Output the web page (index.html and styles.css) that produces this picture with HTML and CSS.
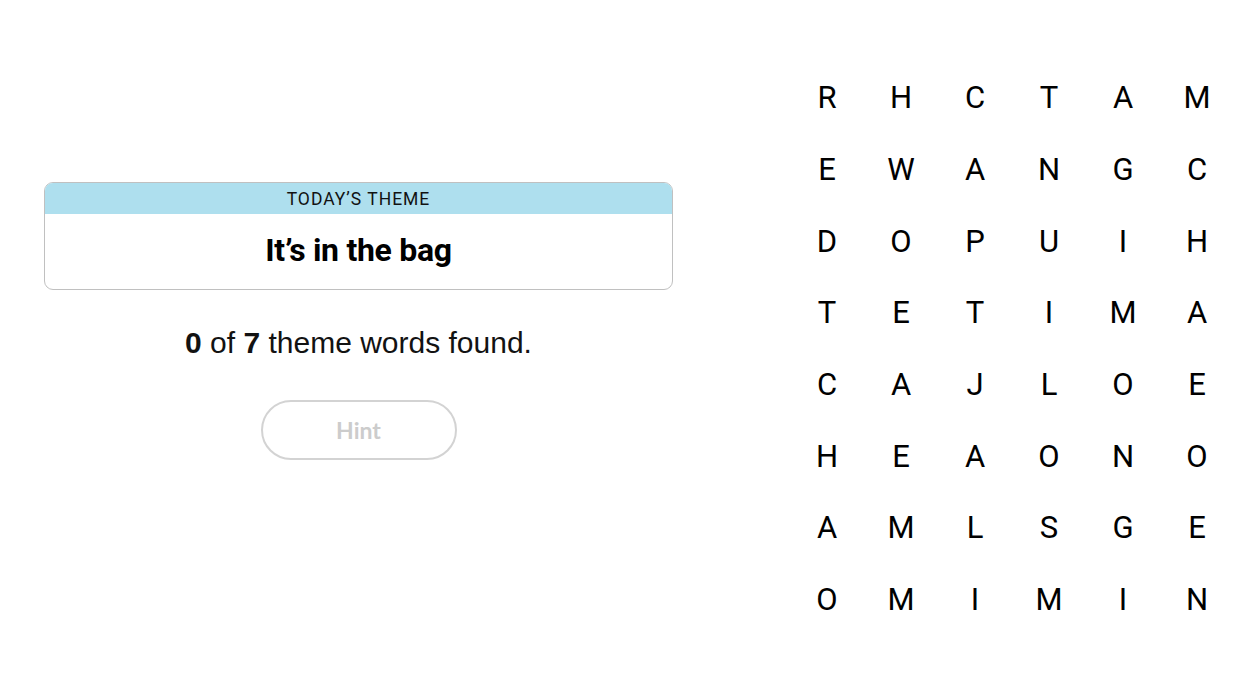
FILE: index.html
```html
<!DOCTYPE html>
<html>
<head>
<meta charset="utf-8">
<link rel="stylesheet" href="styles.css">
</head>
<body>
<main class="page">
  <section class="side">
    <div class="theme-card">
      <div class="theme-head">TODAY’S THEME</div>
      <div class="theme-body">It’s in the bag</div>
    </div>
    <p class="progress"><b>0</b> of <b>7</b> theme words found.</p>
    <button class="hint" type="button">Hint</button>
  </section>
  <section class="board">
    <span>R</span><span>H</span><span>C</span><span>T</span><span>A</span><span>M</span>
    <span>E</span><span>W</span><span>A</span><span>N</span><span>G</span><span>C</span>
    <span>D</span><span>O</span><span>P</span><span>U</span><span>I</span><span>H</span>
    <span>T</span><span>E</span><span>T</span><span>I</span><span>M</span><span>A</span>
    <span>C</span><span>A</span><span>J</span><span>L</span><span>O</span><span>E</span>
    <span>H</span><span>E</span><span>A</span><span>O</span><span>N</span><span>O</span>
    <span>A</span><span>M</span><span>L</span><span>S</span><span>G</span><span>E</span>
    <span>O</span><span>M</span><span>I</span><span>M</span><span>I</span><span>N</span>
  </section>
</main>
</body>
</html>
```

FILE: styles.css
```css
html, body {
  margin: 0;
  padding: 0;
  background: #ffffff;
  color: #000000;
  font-family: "Roboto", "Liberation Sans", sans-serif;
}

.page {
  display: flex;
  align-items: flex-start;
  width: 1250px;
  height: 680px;
}

.side {
  display: flex;
  flex-direction: column;
  align-items: center;
  width: 629px;
  margin-left: 44px;
  padding-top: 182px;
}

.theme-card {
  width: 627px;
  border: 1px solid #c0c0c0;
  border-radius: 9px;
  overflow: hidden;
}

.theme-head {
  background: #aedfee;
  height: 31px;
  line-height: 32px;
  text-align: center;
  font-size: 17.5px;
  letter-spacing: 1px;
  color: #121212;
}

.theme-body {
  height: 75px;
  line-height: 73px;
  text-align: center;
  font-size: 32px;
  font-weight: 700;
  letter-spacing: -0.3px;
  color: #000;
}

.progress {
  margin: 35px 0 0;
  font-family: "Liberation Sans", sans-serif;
  font-size: 30px;
  line-height: 36px;
  color: #121212;
}

.hint {
  margin-top: 39px;
  width: 196px;
  height: 60px;
  border: 2px solid #d3d3d3;
  border-radius: 30px;
  background: #fff;
  color: #cccccc;
  font-family: "Lato", sans-serif;
  font-weight: 700;
  font-size: 23px;
  padding: 0;
}

.board {
  display: grid;
  grid-template-columns: repeat(6, 74px);
  grid-auto-rows: 71.7px;
  margin-left: 117px;
  margin-top: 62px;
}

.board span {
  display: flex;
  align-items: center;
  justify-content: center;
  font-size: 31px;
  color: #000;
}
```
